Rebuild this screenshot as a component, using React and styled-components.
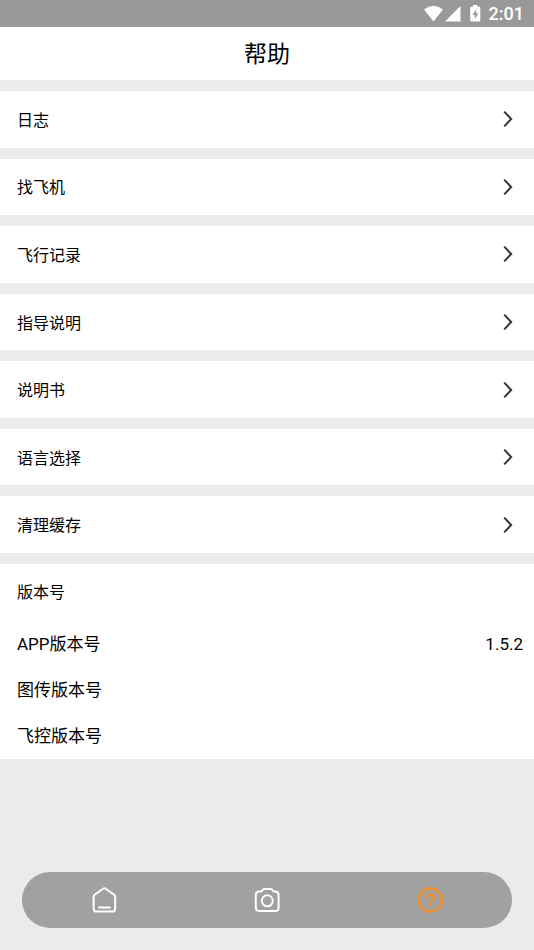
import styled, { createGlobalStyle } from "styled-components"

const GlobalStyle = createGlobalStyle`
  * {
    box-sizing: border-box;
  }

  body {
    margin: 0;
    background-color: #ebebeb;
    color: #000;
    font-family: Roboto, "Noto Sans CJK SC", sans-serif;
  }
`;

const Page = styled.div`
  min-height: 100vh;
  display: flex;
  flex-direction: column;
`;

const StatusBar = styled.div`
  height: 27px;
  padding: 0 10px;
  display: flex;
  align-items: center;
  justify-content: flex-end;
  background-color: #999;
  color: #fff;

  svg {
    display: block;
  }

  time {
    margin-left: 6px;
    font-size: 18px;
    line-height: 27px;
    font-weight: 500;
  }
`;

const Header = styled.header`
  height: 53px;
  padding-top: 2px;
  display: flex;
  align-items: center;
  justify-content: center;
  background-color: #fff;

  h1 {
    margin: 0;
    font-size: 23px;
    line-height: 32px;
    font-weight: 400;
  }
`;

const Main = styled.main`
  flex: 1;
  display: flex;
  flex-direction: column;
  gap: 11px;
  padding-top: 11px;
`;

// the rows share the free height of the screen, up to 64px each
const Menu = styled.nav`
  flex: 1;
  display: flex;
  flex-direction: column;
  gap: 11px;
`;

const MenuRow = styled.button`
  flex: 1 1 52px;
  max-height: 64px;
  width: 100%;
  padding: 0 21px 0 17px;
  display: flex;
  align-items: center;
  justify-content: space-between;
  border: none;
  background-color: #fff;
  color: inherit;
  font-family: inherit;
  font-size: 16px;
  line-height: 24px;
  text-align: left;
  cursor: pointer;
`;

const RowLabel = styled.span`
  padding-top: 3px;
`;

const Versions = styled.section`
  background-color: #fff;

  h2 {
    margin: 0;
    padding: 1px 17px 0;
    font-size: 16px;
    line-height: 56px;
    font-weight: 400;
  }

  dl {
    margin: 0;
  }
`;

const VersionRow = styled.div`
  padding: 0 11px 0 17px;
  display: flex;
  justify-content: space-between;
  font-size: 17px;
  line-height: 46px;

  dd {
    margin: 0;
  }
`;

const TabBar = styled.nav`
  height: 56px;
  margin: 113px 22px 22px;
  display: grid;
  grid-template-columns: repeat(3, 1fr);
  border-radius: 28px;
  background-color: #a1a1a1;
`;

const Tab = styled.button`
  display: flex;
  align-items: center;
  justify-content: center;
  padding: 0;
  border: none;
  background: none;
  color: ${({ $active }) => ($active ? "#ee8d2c" : "#fff")};
  cursor: pointer;
`;

const Icon = ({ size = 28, children }) => (
  <svg
    width={size}
    height={size}
    viewBox="0 0 28 28"
    fill="none"
    stroke="currentColor"
    strokeWidth="2"
    strokeLinecap="round"
    strokeLinejoin="round"
    aria-hidden="true"
  >
    {children}
  </svg>
);

const HomeIcon = () => (
  <Icon>
    <path d="M3.6 11Q3.6 9.6 4.7 8.8L13.1 2.8Q14.4 1.9 15.7 2.8L24.1 8.8Q25.2 9.6 25.2 11V22.4Q25.2 25.6 22 25.6H6.8Q3.6 25.6 3.6 22.4Z" />
    <path d="M9 21.4H20" />
  </Icon>
);

const CameraIcon = () => (
  <Icon>
    <path d="M6 5.6H8.2L10 3.6Q10.6 3 11.5 3H17.5Q18.4 3 19 3.6L20.8 5.6H22Q25.6 5.6 25.6 9.2V21.4Q25.6 25 22 25H6.4Q2.8 25 2.8 21.4V9.2Q2.8 5.6 6 5.6Z" />
    <circle cx="14.3" cy="14.8" r="5.5" />
  </Icon>
);

const HelpIcon = () => (
  <Icon>
    <circle cx="14.3" cy="14" r="11.6" strokeWidth="2.6" />
    <path d="M10.6 12C10.8 7.4 17.9 7.4 18 11.6C18 14.2 14.6 14 14.5 16.2" strokeWidth="2.4" />
    <path d="M14.3 19.4V19.6" strokeWidth="2.6" />
  </Icon>
);

const Chevron = () => (
  <svg width="10" height="18" viewBox="0 0 10 18" fill="none" stroke="#333" strokeWidth="2" aria-hidden="true">
    <path d="M1.2 1.6L8.2 9L1.2 16.4" />
  </svg>
);

const menuItems = ["日志", "找飞机", "飞行记录", "指导说明", "说明书", "语言选择", "清理缓存"];

const versions = [
  { name: "APP版本号", value: "1.5.2" },
  { name: "图传版本号", value: "" },
  { name: "飞控版本号", value: "" },
];

const App = () => {
  return (
    <Page>
      <GlobalStyle />
      <StatusBar>
        {/* Wifi, signal and battery */}
        <svg width="60" height="20" viewBox="0 0 60 20" fill="#fff" aria-hidden="true">
          <path d="M1 5.5Q10.5-1.9 20 5.5L10.5 17.5Z" />
          <path d="M37.5 2V17.5H22Z" />
          <path d="M48.2 2.8H50V1H54.5V2.8H56.3Q57.3 2.8 57.3 3.8V16.5Q57.3 17.5 56.3 17.5H48.2Q47.2 17.5 47.2 16.5V3.8Q47.2 2.8 48.2 2.8Z" />
          <path d="M53.2 5L49.6 11H51.8V15.3L55.2 9.3H53.2Z" fill="#999" />
        </svg>
        <time>2:01</time>
      </StatusBar>
      <Header>
        <h1>帮助</h1>
      </Header>
      <Main>
        <Menu aria-label="帮助">
          {menuItems.map((item) => (
            <MenuRow key={item} type="button">
              <RowLabel>{item}</RowLabel>
              <Chevron />
            </MenuRow>
          ))}
        </Menu>
        <Versions>
          <h2>版本号</h2>
          <dl>
            {versions.map(({ name, value }) => (
              <VersionRow key={name}>
                <dt>{name}</dt>
                <dd>{value}</dd>
              </VersionRow>
            ))}
          </dl>
        </Versions>
      </Main>
      <TabBar>
        <Tab type="button" aria-label="首页">
          <HomeIcon />
        </Tab>
        <Tab type="button" aria-label="相机">
          <CameraIcon />
        </Tab>
        <Tab type="button" aria-label="帮助" aria-current="page" $active>
          <HelpIcon />
        </Tab>
      </TabBar>
    </Page>
  )
}

export default App
